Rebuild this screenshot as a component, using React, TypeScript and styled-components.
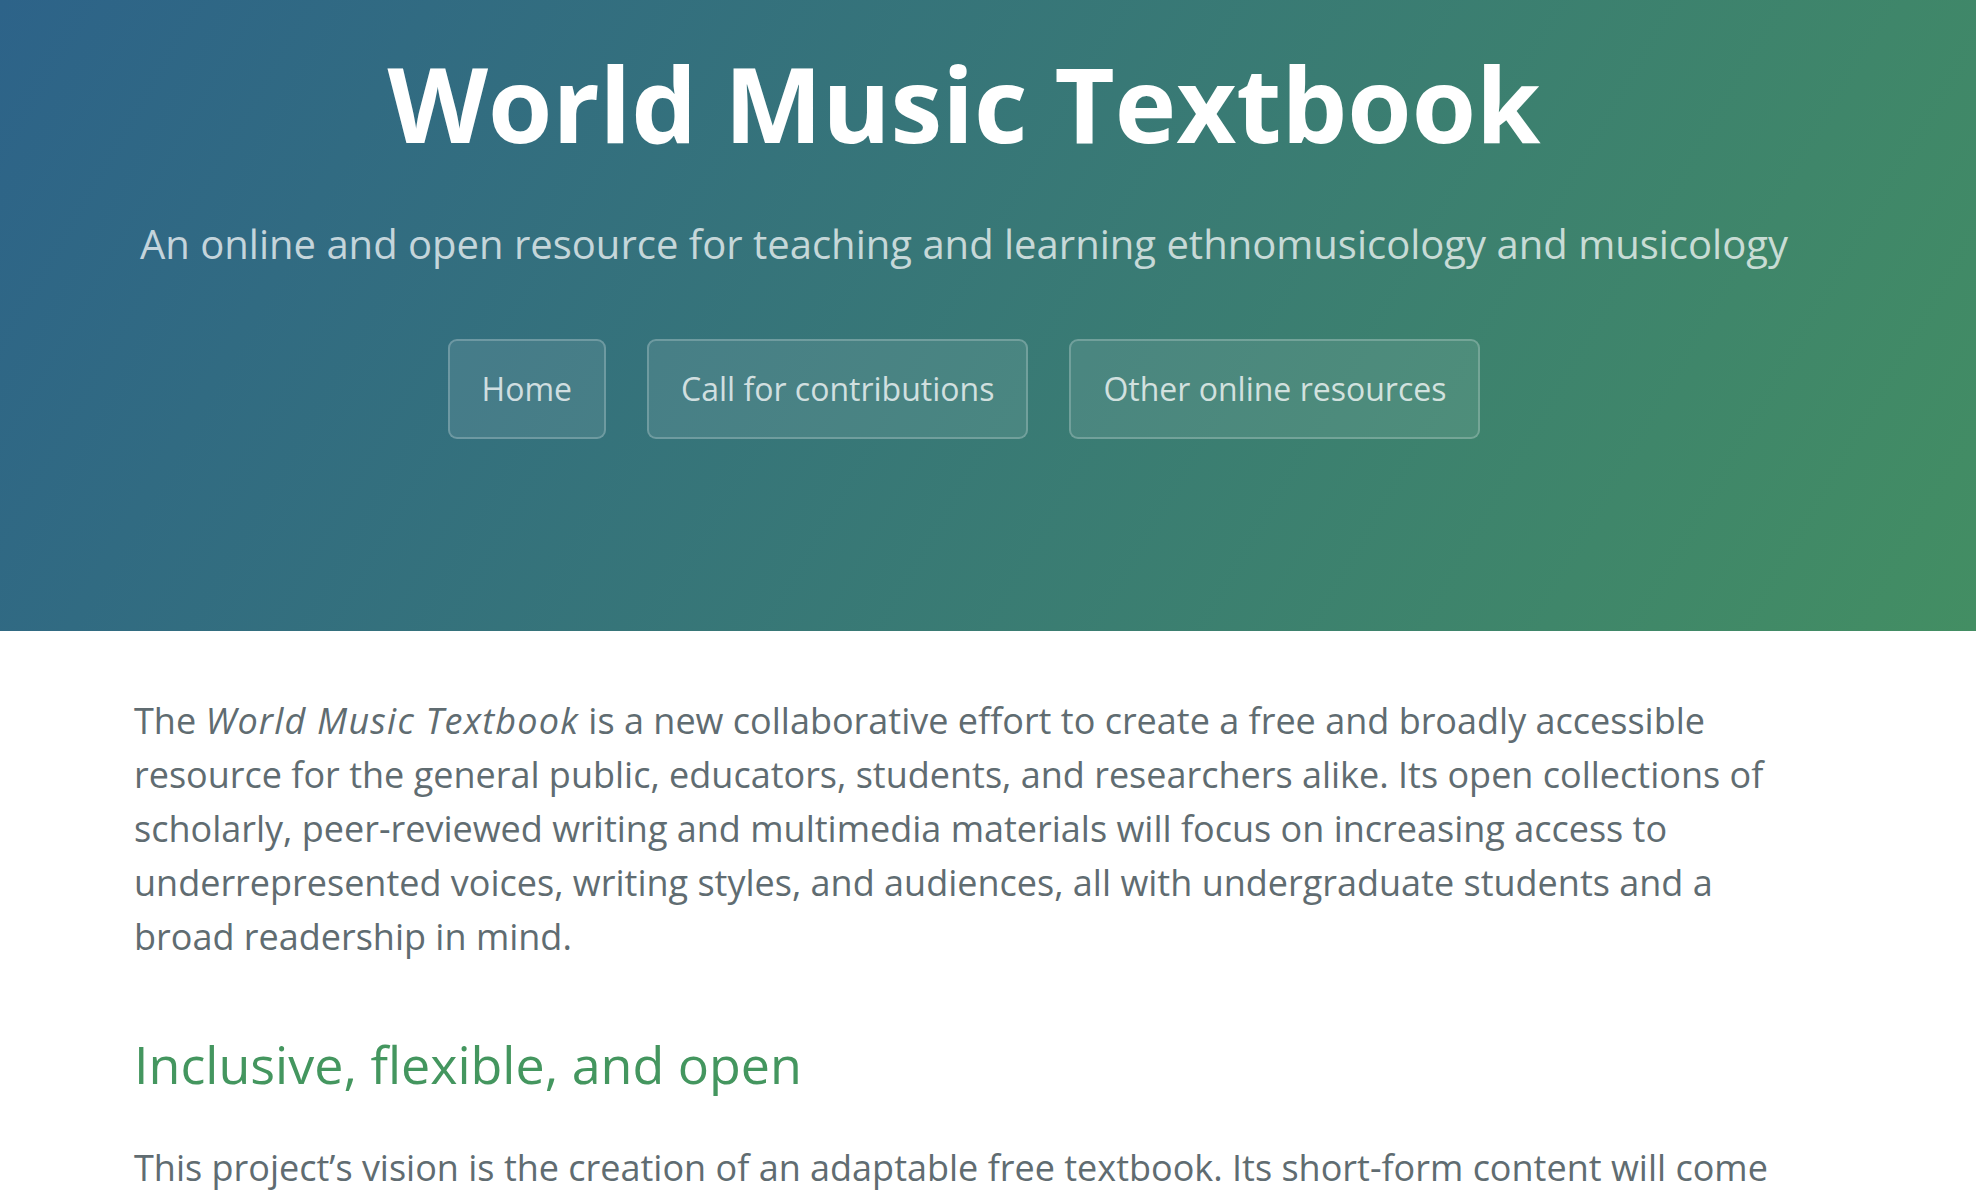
import * as React from "react";
import styled, { createGlobalStyle } from "styled-components";

const GlobalStyle = createGlobalStyle`
  html, body {
    margin: 0;
    padding: 0;
    background: #fff;
  }
  body {
    font-family: "Open Sans", "Helvetica Neue", Helvetica, Arial, sans-serif;
    color: #606c71;
  }
`;

const PageHeader = styled.header`
  height: 631px;
  box-sizing: border-box;
  padding: 46px 64px 0 16px;
  text-align: center;
  color: #fff;
  background-color: #2f6f7a;
  background-image: linear-gradient(120deg, #2d6389, #438e63);
`;

const ProjectName = styled.h1`
  margin: 0;
  font-size: 104px;
  font-weight: 700;
  line-height: 1.1;
  color: #fff;
`;

const ProjectTagline = styled.h2`
  margin: 54px 0 0;
  font-size: 40px;
  font-weight: 400;
  line-height: 1.5;
  color: rgba(255, 255, 255, 0.72);
`;

const Nav = styled.nav`
  display: flex;
  justify-content: center;
  gap: 41px;
  margin-top: 65px;
`;

const Btn = styled.a`
  display: inline-block;
  padding: 24px 32px;
  font-size: 32px;
  line-height: 1.5;
  color: rgba(255, 255, 255, 0.75);
  text-decoration: none;
  background-color: rgba(255, 255, 255, 0.09);
  border: 2px solid rgba(255, 255, 255, 0.22);
  border-radius: 9px;
`;

const MainContent = styled.main`
  padding: 63px 182px 0 134px;
  font-size: 36px;
  line-height: 1.5;
  word-wrap: normal;
`;

const Para = styled.p`
  margin: 0;

  em {
    letter-spacing: 1.2px;
  }
`;

const SectionTitle = styled.h2`
  margin: 67px 0 45px;
  font-size: 52px;
  font-weight: 400;
  line-height: 1.25;
  color: #44965f;
`;

function App() {
  return (
    <>
      <GlobalStyle />
      <PageHeader>
        <ProjectName>World Music Textbook</ProjectName>
        <ProjectTagline>
          An online and open resource for teaching and learning ethnomusicology
          and musicology
        </ProjectTagline>
        <Nav>
          <Btn href="#">Home</Btn>
          <Btn href="#">Call for contributions</Btn>
          <Btn href="#">Other online resources</Btn>
        </Nav>
      </PageHeader>
      <MainContent>
        <Para>
          The <em>World Music Textbook</em> is a new collaborative effort to
          create a free and broadly accessible resource for the general public,
          educators, students, and researchers alike. Its open collections of
          scholarly, peer-reviewed writing and multimedia materials will focus
          on increasing access to underrepresented voices, writing styles, and
          audiences, all with undergraduate students and a broad readership in
          mind.
        </Para>
        <SectionTitle>Inclusive, flexible, and open</SectionTitle>
        <Para>
          This project’s vision is the creation of an adaptable free textbook.
          Its short-form content will come from a wide range of contributors,
          and instructors will be able to select the chapters that best suit
          their own courses and students.
        </Para>
      </MainContent>
    </>
  );
}
export default App;
